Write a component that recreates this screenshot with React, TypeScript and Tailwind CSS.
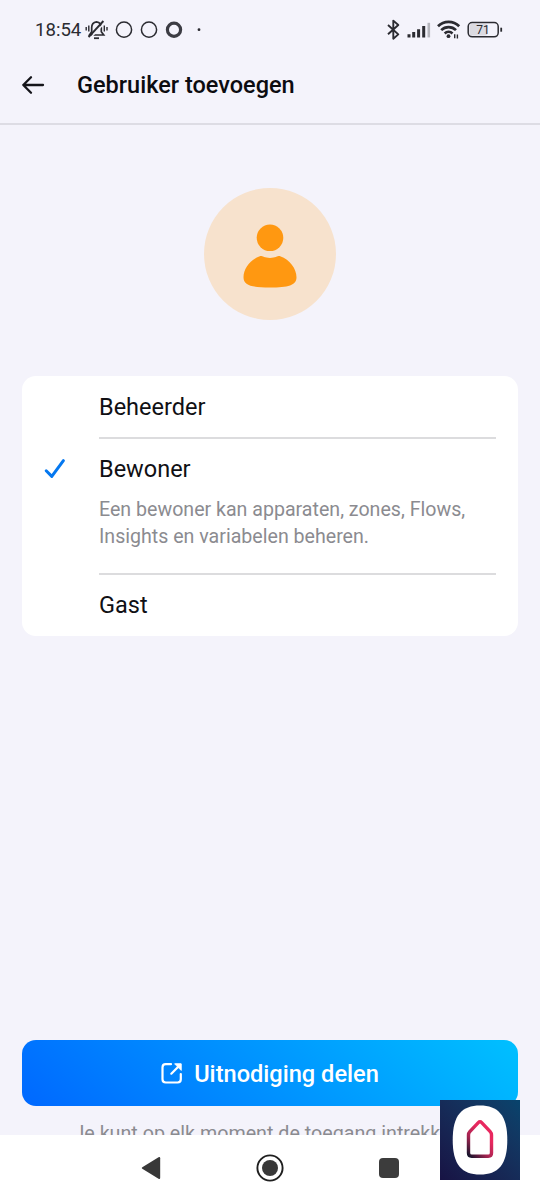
import { useState } from "react";

type Role = {
  id: string;
  name: string;
  description: string;
};

const ROLES: Role[] = [
  {
    id: "manager",
    name: "Beheerder",
    description: "Een beheerder kan alles beheren.",
  },
  {
    id: "resident",
    name: "Bewoner",
    description:
      "Een bewoner kan apparaten, zones, Flows, Insights en variabelen beheren.",
  },
  {
    id: "guest",
    name: "Gast",
    description: "Een gast kan apparaten bedienen.",
  },
];

function StatusBar() {
  return (
    <div className="flex h-12 shrink-0 items-center pt-3 pr-[37px] pl-[35px] text-[#2b2b31]">
      <span className="w-[50px] text-[18.6px] leading-6 whitespace-nowrap">
        18:54
      </span>
      {/* muted bell and notifications */}
      <svg className="h-6 w-[120px]" viewBox="85 18 120 24" fill="none" stroke="currentColor" strokeWidth="1.7">
        <path d="M89.5 35h14.2l-2.4-3.2V27.4q0-4.9-4.8-5.6-4.8.7-4.8 5.6v4.4z" />
        <path d="M94 38.2h5" strokeWidth="1.8" />
        <path d="M90.6 37.8 105 22.6" stroke="#f4f3fb" strokeWidth="1.4" />
        <path d="M88.6 37.2 103.4 21" strokeWidth="1.9" />
        <path d="M86.2 27v3.4M88.8 25.5v6M104.3 25.5v6M107 27v3.4" strokeWidth="1.4" />
        <circle cx="124" cy="29.7" r="7.6" strokeWidth="1.5" />
        <circle cx="149" cy="29.7" r="7.6" strokeWidth="1.5" />
        <circle cx="174" cy="29.7" r="6.6" strokeWidth="3.2" stroke="#3c3c43" />
        <circle cx="199" cy="29.7" r="1.4" fill="currentColor" stroke="none" />
      </svg>
      {/* bluetooth, signal, wifi and battery */}
      <svg className="ml-auto h-6 w-[118px]" viewBox="385 18 118 24" fill="none" stroke="currentColor">
        <path d="m388 25 10.3 9.4-5 4.3V20.6l5 4.4L388 34.2" strokeWidth="1.9" strokeLinejoin="round" />
        <path d="M409 34.2V37.4M413.7 32v5.4M418.6 29.2v8.2M423.7 26v11.4" strokeWidth="3" strokeLinecap="butt" />
        <path d="M428.8 22.8v14.6" strokeWidth="2.6" stroke="#b5b5bc" />
        <path d="M438 26.3a15 15 0 0 1 21.2 0M441.2 30.1a10.5 10.5 0 0 1 14.8 0M444.7 33.5a5.7 5.7 0 0 1 7.8 0" strokeWidth="2.7" />
        <circle cx="448.5" cy="36.2" r="1.9" fill="currentColor" stroke="none" />
        <path d="M454.7 38.2v-4M457.4 34.5v4" strokeWidth="1.4" />
        <rect x="469.5" y="23.9" width="18" height="11.6" rx="2" fill="#dbdae1" stroke="none" />
        <rect x="468.2" y="22.6" width="30" height="14.2" rx="4" strokeWidth="1.5" />
        <path d="M501.2 27.7v4" strokeWidth="1.8" />
        <text x="483" y="34" textAnchor="middle" fontSize="12" fill="currentColor" stroke="none">
          71
        </text>
      </svg>
    </div>
  );
}

function Header() {
  return (
    <header className="flex h-[77px] shrink-0 items-center border-b-2 border-[#dddce4] pb-0.5 pl-[21px]">
      <svg className="h-6 w-6" viewBox="0 0 24 24" fill="none" stroke="#15151a" strokeWidth="2.3" strokeLinecap="round" strokeLinejoin="round">
        <path d="M22 12H2.3M10 4.3 2.3 12l7.7 7.7" />
      </svg>
      <h1 className="ml-8 text-[23.5px] leading-8 font-medium text-[#0c0c10]">
        Gebruiker toevoegen
      </h1>
    </header>
  );
}

function Avatar() {
  return (
    <div className="mx-auto mt-[63.4px] flex size-[132px] shrink-0 items-center justify-center rounded-full bg-[#f7e2cd] pt-[3px]">
      <svg className="h-16 w-14" viewBox="0 0 56 64" fill="#ff9811">
        <circle cx="28" cy="13.8" r="13.3" />
        <path d="M17.8 32.2c2.2-.9 4 1.7 10.2 1.7s8-2.6 10.2-1.7C48 35.8 54.5 44.7 54.5 53.2c0 8.2-8.3 10.3-26.5 10.3S1.5 61.4 1.5 53.2c0-8.5 6.5-17.4 16.3-21z" />
      </svg>
    </div>
  );
}

function RoleList() {
  const [selected, setSelected] = useState<string>("resident");

  return (
    <div className="mx-[22px] mt-[55.6px] shrink-0 rounded-[14px] bg-white">
      {ROLES.map((role, index) => {
        const active = role.id === selected;
        return (
          <button
            key={role.id}
            className="flex w-full pr-[22px] text-left"
            onClick={() => setSelected(role.id)}
          >
            <span className="flex h-[60px] w-[77px] shrink-0 items-center pl-[22px]">
              {active && (
                <svg className="h-[22px] w-[22px]" viewBox="0 0 22 22" fill="none" stroke="#0578f0" strokeWidth="3" strokeLinecap="round" strokeLinejoin="round">
                  <path d="m2.2 12.8 5.6 5.6L19.4 2.6" />
                </svg>
              )}
            </span>
            <span
              className={
                index < ROLES.length - 1
                  ? "flex grow flex-col border-b-2 border-[#dcdcde]"
                  : "flex grow flex-col"
              }
            >
              <span
                className={
                  index === 0
                    ? "flex h-[61px] items-center pt-[3px] text-[23.5px] text-[#101014]"
                    : "flex h-[61px] items-center text-[23.5px] text-[#101014]"
                }
              >
                {role.name}
              </span>
              {active && (
                <span className="-mt-1 pb-[22px] text-[19.6px] leading-[27.5px] text-[#8b8b90]">
                  {role.description}
                </span>
              )}
            </span>
          </button>
        );
      })}
    </div>
  );
}

function NavigationBar() {
  return (
    <nav className="flex h-[65px] shrink-0 items-center justify-between bg-white pr-[141.5px] pl-[141px]">
      <svg className="h-6 w-5" viewBox="0 0 20 24" fill="#383838">
        <path d="M1.3 11.2 17.5 1.2q1.7-.8 1.7 1v19.6q0 1.8-1.7 1L1.3 12.8q-1.2-.8 0-1.6z" />
      </svg>
      <svg className="h-7 w-7" viewBox="0 0 28 28" fill="none">
        <circle cx="14" cy="14" r="12.6" stroke="#1f1f1f" strokeWidth="1.9" />
        <circle cx="14" cy="14" r="8" fill="#383838" />
      </svg>
      <span className="size-5 rounded bg-[#3c3c3c]" />
    </nav>
  );
}

function AppBadge() {
  return (
    <div className="absolute right-5 bottom-5 flex size-20 items-center justify-center bg-linear-to-tr from-[#171344] to-[#07446d]">
      <svg className="size-20" viewBox="0 0 80 80" fill="none">
        <defs>
          <linearGradient id="house" x1="27" y1="54" x2="46" y2="36" gradientUnits="userSpaceOnUse">
            <stop stopColor="#17142c" />
            <stop offset=".5" stopColor="#a32450" />
            <stop offset="1" stopColor="#e8285f" />
          </linearGradient>
        </defs>
        <path d="M40 5.5c18 0 27.3 9.5 27.3 34.5S58 74.5 40 74.5 12.7 65 12.7 40 22 5.5 40 5.5z" fill="#fff" />
        <path d="M28.5 35q0-2 1.3-3.4l8.5-9q1.7-1.8 3.4 0l8.5 9q1.3 1.4 1.3 3.4v18q0 3.2-3.2 3.2H31.7q-3.2 0-3.2-3.2z" stroke="url(#house)" strokeWidth="3.4" />
      </svg>
    </div>
  );
}

function App() {
  return (
    <div className="relative flex h-[1200px] w-[540px] flex-col overflow-hidden bg-[#f4f3fb] font-[Roboto,sans-serif]">
      <StatusBar />
      <Header />
      <main className="flex min-h-0 grow flex-col">
        <Avatar />
        <RoleList />
        <div className="mt-auto h-[94.6px] shrink-0 overflow-hidden px-[22px]">
          <button className="flex h-[66px] w-full items-center justify-center gap-[11px] rounded-[14px] bg-[linear-gradient(42deg,#0068ff,#00c0ff)] pt-0.5 text-[23.6px] font-medium text-white">
            <svg className="-mt-0.5 size-[22px]" viewBox="0 0 22 22" fill="none" stroke="currentColor" strokeWidth="2.2" strokeLinecap="round" strokeLinejoin="round">
              <path d="M10 2.2H4.7Q1.5 2.2 1.5 5.4v11.9q0 3.2 3.2 3.2h11.9q3.2 0 3.2-3.2V12M10.3 11.7 18 4" />
              <path d="M14 1.8h6.2V8z" fill="currentColor" strokeWidth="1" />
            </svg>
            Uitnodiging delen
          </button>
          <p className="mt-[13.5px] flex justify-center text-[19.7px] leading-7 whitespace-nowrap text-[#8b8b90]">
            Je kunt op elk moment de toegang intrekken.
          </p>
        </div>
      </main>
      <NavigationBar />
      <AppBadge />
    </div>
  );
}

export default App;
